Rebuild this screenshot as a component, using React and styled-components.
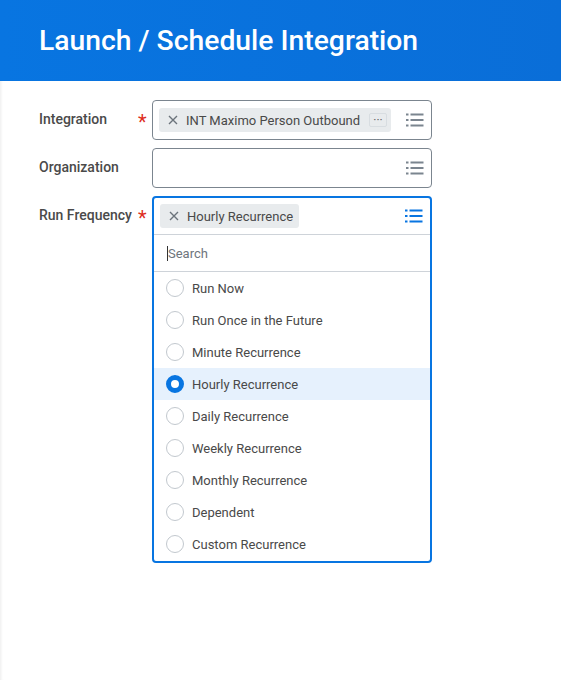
import React from 'react';
import styled, { createGlobalStyle } from 'styled-components';

const Global = createGlobalStyle`
   html, body { margin: 0; padding: 0; background: #fff; }
   body { font-family: Roboto, "Liberation Sans", sans-serif; color: #333; }
`;

const options = [
   'Run Now',
   'Run Once in the Future',
   'Minute Recurrence',
   'Hourly Recurrence',
   'Daily Recurrence',
   'Weekly Recurrence',
   'Monthly Recurrence',
   'Dependent',
   'Custom Recurrence',
];

const ListIcon = ({ color = '#7b858f' }) => (
   <svg width='18' height='14' viewBox='0 0 18 14'>
      <rect x='0' y='0.5' width='2.5' height='2' fill={ color } />
      <rect x='4.5' y='0.5' width='13' height='2' fill={ color } />
      <rect x='0' y='6' width='2.5' height='2' fill={ color } />
      <rect x='4.5' y='6' width='13' height='2' fill={ color } />
      <rect x='0' y='11.5' width='2.5' height='2' fill={ color } />
      <rect x='4.5' y='11.5' width='13' height='2' fill={ color } />
   </svg>
);

const Close = () => (
   <svg width='10' height='10' viewBox='0 0 10 10'>
      <path d='M1 1 L9 9 M9 1 L1 9' stroke='#6b737b' strokeWidth='1.4' />
   </svg>
);

export default function App() {
   return (
      <Page>
         <Global />
         <Header>
            <Title>Launch / Schedule Integration</Title>
         </Header>
         <Form>
            <Row>
               <Label>Integration</Label>
               <Required>*</Required>
               <Field>
                  <Pill grow>
                     <Close />
                     <PillText>INT Maximo Person Outbound</PillText>
                     <More>···</More>
                  </Pill>
                  <IconSlot><ListIcon /></IconSlot>
               </Field>
            </Row>
            <Row>
               <Label>Organization</Label>
               <Required />
               <Field>
                  <Spacer />
                  <IconSlot><ListIcon /></IconSlot>
               </Field>
            </Row>
            <Row>
               <Label>Run Frequency</Label>
               <Required>*</Required>
               <Dropdown>
                  <DropHead>
                     <Pill>
                        <Close />
                        <PillText>Hourly Recurrence</PillText>
                     </Pill>
                     <IconSlot><ListIcon color='#0875e1' /></IconSlot>
                  </DropHead>
                  <SearchRow>
                     <Caret />
                     <SearchText>Search</SearchText>
                  </SearchRow>
                  <Options>
                     { options.map((o) => (
                        <Option key={ o } selected={ o === 'Hourly Recurrence' }>
                           <Radio selected={ o === 'Hourly Recurrence' } />
                           { o }
                        </Option>
                     )) }
                  </Options>
               </Dropdown>
            </Row>
         </Form>
      </Page>
   );
}

const Page = styled.div`
   min-height: 680px;
   box-shadow: inset 3px 0 3px -2px rgba(0, 0, 0, 0.08);
`;

const Header = styled.header`
   height: 81px;
   background: linear-gradient(90deg, #0875e1 0%, #0a6ed8 100%);
   display: flex;
   align-items: center;
   padding-left: 39px;
`;

const Title = styled.h1`
   margin: 0;
   margin-top: -1px;
   color: #fff;
   font-size: 28.3px;
   font-weight: 500;
`;

const Form = styled.div`
   padding: 19px 0 0 39px;
   display: flex;
   flex-direction: column;
   gap: 8px;
`;

const Row = styled.div`
   display: flex;
   align-items: flex-start;
`;

const Label = styled.div`
   width: 98px;
   height: 40px;
   line-height: 39px;
   font-size: 14px;
   font-weight: 500;
   color: #4a4a4a;
`;

const Required = styled.div`
   width: 14px;
   height: 40px;
   line-height: 44px;
   font-size: 20px;
   color: #de2e21;
   padding-left: 1px;
`;

const Field = styled.div`
   box-sizing: border-box;
   width: 280px;
   height: 40px;
   border: 1px solid #7b858f;
   border-radius: 4px;
   display: flex;
   align-items: center;
   padding: 0 7px 0 6px;
   gap: 15px;
`;

const Spacer = styled.div`
   flex: 1;
`;

const Pill = styled.div`
   ${ ({ grow }) => grow ? 'flex: 1; min-width: 0;' : '' }
   height: 24px;
   background: #e8ebed;
   border-radius: 3px;
   display: flex;
   align-items: center;
   padding: 0 4px 0 9px;
   gap: 8px;
   font-size: 13px;
   color: #494949;
`;

const PillText = styled.span`
   flex: 1;
   min-width: 0;
   white-space: nowrap;
   overflow: hidden;
   padding-right: 2px;
`;

const More = styled.span`
   box-sizing: border-box;
   flex-shrink: 0;
   display: flex;
   align-items: center;
   justify-content: center;
   border: 1px solid #d8dde1;
   border-radius: 2px;
   width: 18px;
   height: 14px;
   font-size: 12px;
   line-height: 1;
   color: #666;
`;

const IconSlot = styled.div`
   display: flex;
   align-items: center;
   flex-shrink: 0;
`;

const Dropdown = styled.div`
   box-sizing: border-box;
   width: 280px;
   border: 2px solid #0875e1;
   border-radius: 4px;
   overflow: hidden;
`;

const DropHead = styled.div`
   height: 36px;
   display: flex;
   align-items: center;
   justify-content: space-between;
   padding: 0 7px 0 6px;
   border-bottom: 1px solid #ced3d9;
`;

const SearchRow = styled.div`
   height: 36px;
   display: flex;
   align-items: center;
   padding-left: 13px;
   border-bottom: 1px solid #ced3d9;
   font-size: 13px;
   color: #6e757c;
`;

const Caret = styled.span`
   width: 1px;
   height: 15px;
   background: #333;
`;

const SearchText = styled.span``;

const Options = styled.div`
   display: flex;
   flex-direction: column;
   padding-bottom: 1px;
`;

const Option = styled.div`
   height: 32px;
   display: flex;
   align-items: center;
   gap: 8px;
   padding-left: 12px;
   font-size: 13px;
   color: #494949;
   background: ${ ({ selected }) => selected ? '#e6f1fd' : 'transparent' };
`;

const Radio = styled.span`
   box-sizing: border-box;
   width: 18px;
   height: 18px;
   border-radius: 50%;
   background: #fff;
   border: ${ ({ selected }) => selected ? '5.5px solid #0875e1' : '1px solid #c2c8ce' };
`;
